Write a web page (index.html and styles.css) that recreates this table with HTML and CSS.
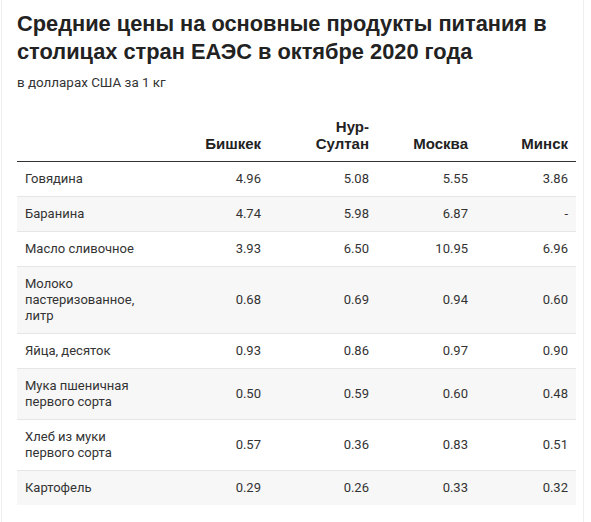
FILE: index.html
```html
<!DOCTYPE html>
<html lang="ru">
<head>
<meta charset="utf-8">
<link rel="stylesheet" href="styles.css">
</head>
<body>
<div class="frame">
  <h1 class="title">Средние цены на основные продукты питания в столицах стран ЕАЭС в октябре 2020 года</h1>
  <p class="subtitle">в долларах США за 1 кг</p>
  <table class="prices">
    <colgroup>
      <col class="c-label"><col class="c-bish"><col class="c-nur"><col class="c-msk"><col class="c-min">
    </colgroup>
    <thead>
      <tr>
        <th class="label"></th>
        <th>Бишкек</th>
        <th>Нур-<br>Султан</th>
        <th>Москва</th>
        <th>Минск</th>
      </tr>
    </thead>
    <tbody>
      <tr><td class="label">Говядина</td><td>4.96</td><td>5.08</td><td>5.55</td><td>3.86</td></tr>
      <tr><td class="label">Баранина</td><td>4.74</td><td>5.98</td><td>6.87</td><td>-</td></tr>
      <tr><td class="label">Масло сливочное</td><td>3.93</td><td>6.50</td><td>10.95</td><td>6.96</td></tr>
      <tr><td class="label">Молоко пастеризованное, литр</td><td>0.68</td><td>0.69</td><td>0.94</td><td>0.60</td></tr>
      <tr><td class="label">Яйца, десяток</td><td>0.93</td><td>0.86</td><td>0.97</td><td>0.90</td></tr>
      <tr><td class="label">Мука пшеничная первого сорта</td><td>0.50</td><td>0.59</td><td>0.60</td><td>0.48</td></tr>
      <tr><td class="label">Хлеб из муки первого сорта</td><td>0.57</td><td>0.36</td><td>0.83</td><td>0.51</td></tr>
      <tr><td class="label">Картофель</td><td>0.29</td><td>0.26</td><td>0.33</td><td>0.32</td></tr>
    </tbody>
  </table>
</div>
</body>
</html>
```
FILE: styles.css
```css
html, body {
  margin: 0;
  padding: 0;
  background: #fff;
}
body {
  font-family: Roboto, "Liberation Sans", Arial, sans-serif;
  color: #333;
}
.frame {
  margin-left: 1px;
  width: 583px;
  min-height: 522px;
  box-sizing: border-box;
  padding: 10px 0 0 15px;
  border-left: 1px solid #efefef;
  border-right: 1px solid #efefef;
}
.title {
  margin: 0;
  font-family: "Liberation Sans", Arial, sans-serif;
  font-size: 21.8px;
  line-height: 28px;
  font-weight: 700;
  color: #222;
  width: 555px;
}
.subtitle {
  margin: 9px 0 0;
  font-size: 13.4px;
  line-height: 16px;
  color: #333;
}
.prices {
  margin-top: 19px;
  border-collapse: collapse;
  table-layout: fixed;
  width: 559px;
  font-size: 13px;
  line-height: 16px;
}
.c-label { width: 134px; }
.c-bish { width: 118px; }
.c-nur { width: 108px; }
.c-msk { width: 99px; }
.c-min { width: 100px; }
.prices th {
  font-family: "Liberation Sans", Arial, sans-serif;
  font-size: 15px;
  line-height: 17px;
  font-weight: 700;
  color: #222;
  text-align: right;
  vertical-align: bottom;
  padding: 8px 8px 9px;
  border-bottom: 1px solid #333;
}
.prices td {
  text-align: right;
  vertical-align: middle;
  padding: 9px 8px;
  border-bottom: 1px solid #e6e6e6;
  color: #333;
}
.prices td.label, .prices th.label {
  text-align: left;
}
.prices tbody tr:nth-child(even) td {
  background: #f7f7f7;
}
.prices tbody tr:last-child td {
  border-bottom: none;
}
```
